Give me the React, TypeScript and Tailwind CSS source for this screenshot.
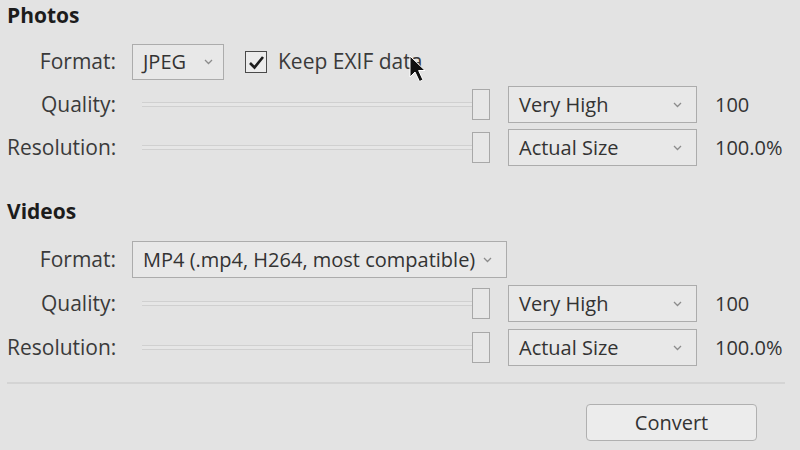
import React from 'react';

const font = { fontFamily: '"Open Sans", "Noto Sans", sans-serif' };

function Chevron() {
  return (
    <svg width="9" height="6" viewBox="0 0 9 6" className="shrink-0">
      <path d="M1 1l3.5 3.5L8 1" fill="none" stroke="#8c8c8c" strokeWidth="1.3" />
    </svg>
  );
}

function Select({ value, width, pr = 'pr-[14px]' }: { value: string; width: string; pr?: string }) {
  return (
    <div
      className={`flex h-full items-center justify-between whitespace-nowrap border border-[#acacac] bg-[#e8e8e8] pl-[10px] text-[20px] text-[#333] ${pr} ${width}`}
    >
      <span>{value}</span>
      <Chevron />
    </div>
  );
}

function Slider() {
  return (
    <div className="flex h-full w-[358px] items-center pl-[10px]">
      <div className="h-[5px] flex-1 border-y border-[#d0d0d0] bg-[#e6e6e6]" />
      <div className="h-[31px] w-[18px] border border-[#a8a8a8] bg-[#e7e7e7]" />
    </div>
  );
}

function Row({ label, children, h = 'h-[37px]' }: { label: string; children: React.ReactNode; h?: string }) {
  return (
    <div className={`flex items-center ${h}`}>
      <div className="w-[109px] text-right text-[#3a3a3a]">{label}</div>
      <div className="ml-4 flex h-full items-center">{children}</div>
    </div>
  );
}

function SliderRow({ label, value, amount }: { label: string; value: string; amount: string }) {
  return (
    <Row label={label}>
      <Slider />
      <div className="ml-[18px] h-full">
        <Select value={value} width="w-[189px]" />
      </div>
      <span className="ml-[18px] text-[20px] text-[#333]">{amount}</span>
    </Row>
  );
}

export default function App() {
  return (
    <div className="relative h-[450px] w-[800px] overflow-hidden bg-[#e3e3e3] pl-[7px] text-[21px]" style={font}>
      <h2 className="h-[30px] text-[21px] font-bold leading-[30px] text-[#1c1c1c]">Photos</h2>

      <div className="mt-[14px] flex flex-col gap-[6px]">
        <Row label="Format:" h="h-[36px]">
          <Select value="JPEG" width="w-[92px]" pr="pr-[10px]" />
          <div className="ml-[21px] flex h-[22px] w-[22px] items-center justify-center border-[1.5px] border-[#4a4a4a] bg-[#ececec]">
            <svg width="17" height="15" viewBox="0 0 17 15">
              <path d="M2 8l4.5 4.5L15 2" fill="none" stroke="#1e1e1e" strokeWidth="2.6" />
            </svg>
          </div>
          <span className="ml-[11px] text-[#3a3a3a]">Keep EXIF data</span>
        </Row>
        <SliderRow label="Quality:" value="Very High" amount="100" />
        <SliderRow label="Resolution:" value="Actual Size" amount="100.0%" />
      </div>

      <h2 className="mt-[30px] h-[30px] text-[21px] font-bold leading-[30px] text-[#1c1c1c]">Videos</h2>

      <div className="mt-[15px] flex flex-col gap-[7px]">
        <Row label="Format:">
          <Select value="MP4 (.mp4, H264, most compatible)" width="w-[375px]" />
        </Row>
        <SliderRow label="Quality:" value="Very High" amount="100" />
        <SliderRow label="Resolution:" value="Actual Size" amount="100.0%" />
      </div>

      <div className="mt-[16px] mr-[15px] h-[2px] bg-[#d4d4d4]" />

      <div className="mt-[20px] flex justify-end pr-[43px]">
        <button className="h-[37px] w-[171px] rounded-[4px] border border-[#b0b0b0] bg-[#ececec] text-[20px] text-[#333]">
          Convert
        </button>
      </div>

      <svg className="absolute left-[409px] top-[55px]" width="18" height="30" viewBox="0 0 18 30">
        <path d="M1 1v21l5-5 4.5 9.5 3.5-1.6-4.4-9.4H16z" fill="#111" stroke="#fff" strokeWidth="1" />
      </svg>
    </div>
  );
}
